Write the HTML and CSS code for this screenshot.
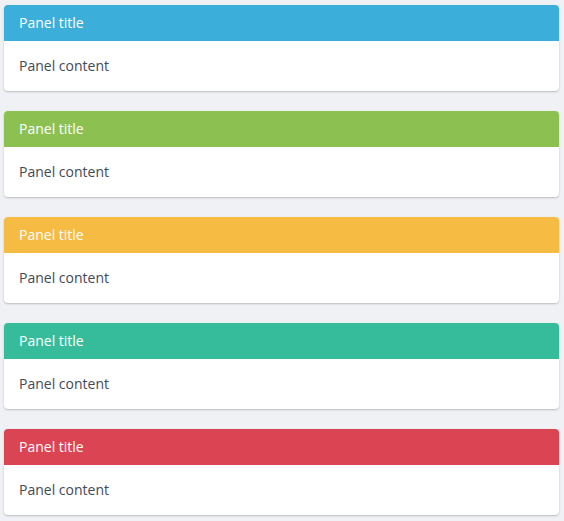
FILE: index.html
```html
<!DOCTYPE html>
<html>
<head>
<meta charset="utf-8">
<link rel="stylesheet" href="styles.css">
</head>
<body>
<div class="panel panel-primary"><div class="panel-heading">Panel title</div><div class="panel-body">Panel content</div></div>
<div class="panel panel-success"><div class="panel-heading">Panel title</div><div class="panel-body">Panel content</div></div>
<div class="panel panel-warning"><div class="panel-heading">Panel title</div><div class="panel-body">Panel content</div></div>
<div class="panel panel-info"><div class="panel-heading">Panel title</div><div class="panel-body">Panel content</div></div>
<div class="panel panel-danger"><div class="panel-heading">Panel title</div><div class="panel-body">Panel content</div></div>
</body>
</html>
```
FILE: styles.css
```css
html, body { margin: 0; }
body {
  background: #f0f1f5;
  padding: 5px 5px 0 4px;
  font-family: "Open Sans", sans-serif;
  font-size: 14px;
  color: #434a54;
}
.panel {
  background: #fff;
  border-radius: 4px;
  box-shadow: 0 1px 2px rgba(0,0,0,.22);
  margin-bottom: 20px;
  overflow: hidden;
}
.panel-heading {
  height: 36px;
  line-height: 36px;
  padding: 0 15px;
  color: #fff;
  box-sizing: border-box;
}
.panel-body {
  height: 50px;
  line-height: 50px;
  padding: 0 15px;
}
.panel-primary .panel-heading { background: #3bafda; }
.panel-success .panel-heading { background: #8cc152; }
.panel-warning .panel-heading { background: #f6bb42; }
.panel-info .panel-heading { background: #37bc9b; }
.panel-danger .panel-heading { background: #da4453; }
```
